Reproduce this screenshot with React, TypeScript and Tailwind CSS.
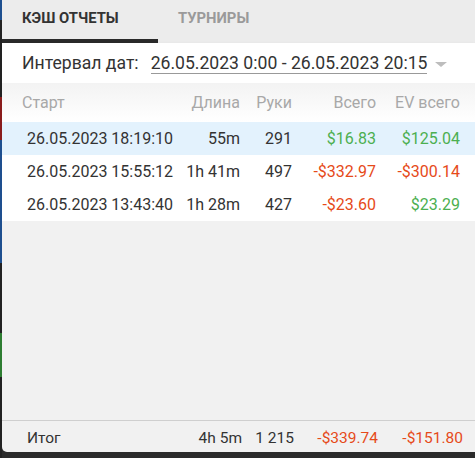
const rows = [
  { start: '26.05.2023 18:19:10', len: '55m', hands: '291', total: '$16.83', ev: '$125.04', active: true },
  { start: '26.05.2023 15:55:12', len: '1h 41m', hands: '497', total: '-$332.97', ev: '-$300.14', active: false },
  { start: '26.05.2023 13:43:40', len: '1h 28m', hands: '427', total: '-$23.60', ev: '$23.29', active: false },
];

const money = (v: string) => (v.startsWith('-') ? 'text-[#e64a19]' : 'text-[#4caf50]');

const cols = 'grid grid-cols-[173px_65px_52px_84px_84px] items-center';

export default function App() {
  return (
    <div className="flex h-[458px] w-[475px] bg-[#2b2b2b] font-['Roboto',sans-serif] text-[#333]">
      {/* обрывки окна за панелью */}
      <div className="flex w-[2px] flex-col">
        <div className="h-[20px] bg-[#1e4f8f]" />
        <div className="h-[77px] bg-[#222]" />
        <div className="h-[43px] bg-[#8a1c1c]" />
        <div className="h-[123px] bg-[#1e4f8f]" />
        <div className="h-[70px] bg-[#222]" />
        <div className="h-[44px] bg-[#2e7d32]" />
        <div className="flex-1 bg-[#222]" />
      </div>

      <div className="flex h-[452px] flex-1 flex-col overflow-hidden rounded-bl-[5px] bg-[#f1f1f1]">
        {/* вкладки */}
        <div className="flex h-[43px] bg-[#ececec]">
          <div className="flex w-[156px] flex-col border-b-4 border-[#2a2a2a]">
            <span className="pl-[20px] pt-[7px] text-[14.8px] font-bold text-[#333]">КЭШ ОТЧЕТЫ</span>
          </div>
          <div className="pl-[20px] pt-[7px] text-[14.8px] font-bold text-[#9a9a9a]">ТУРНИРЫ</div>
        </div>

        {/* фильтр */}
        <div className="flex h-[40px] items-center bg-white pl-[20px] pt-[1px] text-[17.6px] shadow-[0_1px_3px_rgba(0,0,0,0.08)]">
          <span>Интервал дат:</span>
          <span className="ml-[12px] border-b border-[#999] leading-[20px]">26.05.2023 0:00 - 26.05.2023 20:15</span>
          <span className="ml-[8px] mt-[2px] h-0 w-0 border-x-[6px] border-t-[5px] border-x-transparent border-t-[#bdbdbd]" />
        </div>

        {/* таблица */}
        <div className={`${cols} h-[39px] bg-gradient-to-b from-[#f3f3f3] to-white pt-[1px] text-[16px] text-[#a8a8a8]`}>
          <span className="pl-[20px]">Старт</span>
          <span className="text-right">Длина</span>
          <span className="text-right">Руки</span>
          <span className="text-right">Всего</span>
          <span className="text-right">EV всего</span>
        </div>
        {rows.map((r) => (
          <div key={r.start} className={`${cols} h-[33px] text-[16px] ${r.active ? 'bg-[#e3f2fd]' : 'bg-white'}`}>
            <span className="pl-[25px]">{r.start}</span>
            <span className="text-right">{r.len}</span>
            <span className="text-right">{r.hands}</span>
            <span className={`text-right ${money(r.total)}`}>{r.total}</span>
            <span className={`text-right ${money(r.ev)}`}>{r.ev}</span>
          </div>
        ))}
        <div className="flex-1" />

        {/* итог */}
        <div className="grid h-[32px] grid-cols-[175px_65px_52px_84px_85px] items-center border-t border-[#cfcfcf] pt-[5px] text-[15.5px]">
          <span className="pl-[25px]">Итог</span>
          <span className="text-right">4h 5m</span>
          <span className="text-right">1 215</span>
          <span className="text-right text-[#e64a19]">-$339.74</span>
          <span className="text-right text-[#e64a19]">-$151.80</span>
        </div>
      </div>
    </div>
  );
}
